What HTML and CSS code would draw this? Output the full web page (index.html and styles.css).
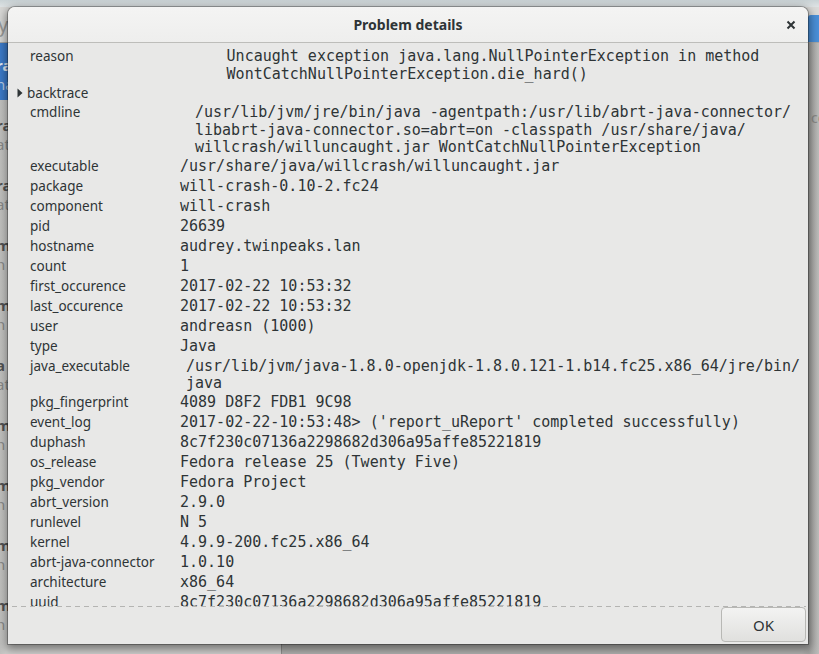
FILE: index.html
```html
<!DOCTYPE html>
<html>
<head>
<meta charset="utf-8">
<link rel="stylesheet" href="styles.css">
</head>
<body>
<div class="app">
  <div class="app-top"></div>
  <div class="app-main">
    <div class="sidebar">
      <div class="side-head"><span class="ghost">y</span></div>
      <div class="side-item selected"><div class="t"><b>ra</b><span class="time">2:16</span></div><div class="s">na</div></div>
      <div class="side-item"><div class="t"><b>ra</b><span class="time">2:14</span></div><div class="s">at</div></div>
      <div class="side-item"><div class="t"><b>ra</b><span class="time">2:12</span></div><div class="s">at</div></div>
      <div class="side-item"><div class="t"><b>m</b><span class="time">2:11</span></div><div class="s">n</div></div>
      <div class="side-item"><div class="t"><b>m</b><span class="time">2:10</span></div><div class="s">n</div></div>
      <div class="side-item"><div class="t"><b>a</b><span class="time">2:09</span></div><div class="s">at</div></div>
      <div class="side-item"><div class="t"><b>m</b><span class="time">2:08</span></div><div class="s">n</div></div>
      <div class="side-item"><div class="t"><b>m</b><span class="time">2:07</span></div><div class="s">n</div></div>
      <div class="side-item"><div class="t"><b>m</b><span class="time">2:06</span></div><div class="s">n</div></div>
      <div class="side-item"><div class="t"><b>m</b><span class="time">2:06</span></div><div class="s">n</div></div>
    </div>
    <div class="pane">
      <div class="pane-head"><span class="blue-btn">Report</span></div>
      <div class="pane-body"><span class="ghost2">core</span></div>
    </div>
  </div>
</div>

<div class="dialog">
  <div class="titlebar">
    <span></span>
    <span class="title">Problem details</span>
    <span class="close"><svg width="10" height="10" viewBox="0 0 10 10"><path d="M1.5 1.5 L8.5 8.5 M8.5 1.5 L1.5 8.5" stroke="#2e3436" stroke-width="2" fill="none"/></svg></span>
  </div>
  <div class="scroll">
    <div class="grid">
      <div class="k">reason</div>
      <div class="v wrap">Uncaught exception java.lang.NullPointerException in method<br>WontCatchNullPointerException.die_hard()</div>

      <div class="exp"><svg width="6" height="10" viewBox="0 0 6 10"><path d="M0.5 0.5 L5.5 5 L0.5 9.5 Z" fill="#2e3436"/></svg><span>backtrace</span></div>

      <div class="k">cmdline</div>
      <div class="v wrap">/usr/lib/jvm/jre/bin/java -agentpath:/usr/lib/abrt-java-connector/<br>libabrt-java-connector.so=abrt=on -classpath /usr/share/java/<br>willcrash/willuncaught.jar WontCatchNullPointerException</div>

      <div class="k">executable</div><div class="v">/usr/share/java/willcrash/willuncaught.jar</div>
      <div class="k">package</div><div class="v">will-crash-0.10-2.fc24</div>
      <div class="k">component</div><div class="v">will-crash</div>
      <div class="k">pid</div><div class="v">26639</div>
      <div class="k">hostname</div><div class="v">audrey.twinpeaks.lan</div>
      <div class="k">count</div><div class="v">1</div>
      <div class="k">first_occurence</div><div class="v">2017-02-22 10:53:32</div>
      <div class="k">last_occurence</div><div class="v">2017-02-22 10:53:32</div>
      <div class="k">user</div><div class="v">andreasn (1000)</div>
      <div class="k">type</div><div class="v">Java</div>
      <div class="k">java_executable</div>
      <div class="v wrap">/usr/lib/jvm/java-1.8.0-openjdk-1.8.0.121-1.b14.fc25.x86_64/jre/bin/<br>java</div>
      <div class="k">pkg_fingerprint</div><div class="v">4089 D8F2 FDB1 9C98</div>
      <div class="k">event_log</div><div class="v">2017-02-22-10:53:48&gt; ('report_uReport' completed successfully)</div>
      <div class="k">duphash</div><div class="v">8c7f230c07136a2298682d306a95affe85221819</div>
      <div class="k">os_release</div><div class="v">Fedora release 25 (Twenty Five)</div>
      <div class="k">pkg_vendor</div><div class="v">Fedora Project</div>
      <div class="k">abrt_version</div><div class="v">2.9.0</div>
      <div class="k">runlevel</div><div class="v">N 5</div>
      <div class="k">kernel</div><div class="v">4.9.9-200.fc25.x86_64</div>
      <div class="k">abrt-java-connector</div><div class="v">1.0.10</div>
      <div class="k">architecture</div><div class="v">x86_64</div>
      <div class="k">uuid</div><div class="v">8c7f230c07136a2298682d306a95affe85221819</div>
      <div class="k">reported_to</div><div class="v">uReport: BTHASH=0000000000000000000000000000000000000000</div>
    </div>
  </div>
  <div class="undershoot"></div>
  <div class="actions"><button class="ok">OK</button></div>
</div>
</body>
</html>
```
FILE: styles.css
```css
html, body {
  margin: 0;
  padding: 0;
}
body {
  width: 819px;
  height: 654px;
  overflow: hidden;
  position: relative;
  font-family: "Noto Sans", "DejaVu Sans", sans-serif;
  background: #d3d9db;
}

/* background application window */
.app {
  display: flex;
  flex-direction: column;
  height: 654px;
  overflow: hidden;
}
.app-top {
  height: 7px;
  flex: none;
  background: linear-gradient(#c9d2d5, #dfe4e5);
}
.app-main {
  flex: 1;
  display: flex;
  min-height: 0;
}
.sidebar {
  width: 281px;
  flex: none;
  border-right: 1px solid #8f8f8d;
  background: linear-gradient(to right, #c2c2c0, #cfcfcd 6px);
  display: flex;
  flex-direction: column;
  overflow: hidden;
}
.side-head {
  height: 35px;
  flex: none;
  background: #d8d8d6;
  border-bottom: 1px solid #a8a8a6;
  display: flex;
  align-items: center;
  overflow: hidden;
}
.ghost {
  color: #9a9a98;
  font-size: 20px;
  margin-left: -2px;
}
.side-item {
  height: 56px;
  flex: none;
  padding: 12px 11px 0 0;
  box-sizing: border-box;
  margin-bottom: 4px;
  font-size: 15px;
  color: #555;
  overflow: hidden;
}
.side-item.selected {
  background: #3d7ccb;
  color: #e6eef8;
  height: 57px;
  margin-bottom: 3px;
}
.side-item .t {
  display: flex;
  justify-content: space-between;
  line-height: 20px;
}
.side-item .t b {
  margin-left: -4px;
}
.side-item .s {
  line-height: 18px;
  margin-left: -4px;
  color: #8d8d8b;
}
.side-item.selected .s {
  color: #bcd0ea;
}
.time {
  color: #9c9c9a;
  font-size: 15px;
}
.pane {
  flex: 1;
  display: flex;
  flex-direction: column;
  overflow: hidden;
}
.pane-head {
  height: 35px;
  flex: none;
  background: #dadad8;
  border-bottom: 1px solid #a8a8a6;
  display: flex;
  align-items: flex-end;
}
.blue-btn {
  margin-left: 526px;
  height: 27px;
  padding: 0 10px;
  background: #4a90d9;
  color: #dbe7f5;
  font-size: 15px;
  line-height: 27px;
  border-radius: 3px 0 0 0;
  white-space: nowrap;
}
.pane-body {
  flex: 1;
  background: linear-gradient(to right, #b0b0ae 520px, #a4a4a2 527px, #bdbdbb 537px);
  padding-top: 63px;
}
.ghost2 {
  margin-left: 529px;
  color: #8a8a88;
  font-size: 14px;
}

/* dialog */
.dialog {
  position: absolute;
  left: 8px;
  top: 7px;
  width: 800px;
  height: 637px;
  background: #e8e8e7;
  border-radius: 7px 7px 0 0;
  box-shadow: 0 0 0 1px rgba(0, 0, 0, 0.28), 0 3px 10px 2px rgba(0, 0, 0, 0.45);
  display: flex;
  flex-direction: column;
  overflow: hidden;
  color: #2e3436;
}
.titlebar {
  height: 35px;
  flex: none;
  display: grid;
  grid-template-columns: 1fr auto 1fr;
  align-items: center;
  background: linear-gradient(#f4f4f3, #eeeeed);
  border-bottom: 1px solid #bdbdba;
}
.title {
  font-weight: bold;
  font-size: 14px;
  color: #2e3436;
}
.close {
  justify-self: end;
  margin-right: 12px;
  display: flex;
}
.scroll {
  height: 563px;
  flex: none;
  overflow: hidden;
}
.grid {
  display: grid;
  grid-template-columns: 150px 626px;
  padding: 4px 0 0 22px;
  align-items: start;
}
.k {
  font-size: 13.5px;
  line-height: 18px;
  padding-bottom: 2px;
  white-space: nowrap;
}
.v {
  font-family: "DejaVu Sans Mono", monospace;
  font-size: 15px;
  line-height: 17.5px;
  padding-top: 1px;
  white-space: nowrap;
}
.v.wrap {
  justify-self: center;
}
.exp {
  grid-column: 1 / -1;
  margin-left: -13px;
  display: flex;
  align-items: center;
  gap: 4px;
  font-size: 13.5px;
  line-height: 20px;
}
.undershoot {
  height: 1px;
  flex: none;
  margin: 0 2px 0 4px;
  background: repeating-linear-gradient(to right, #b4b4b2 0 5px, transparent 5px 9px);
}
.actions {
  flex: 1;
  display: flex;
  justify-content: flex-end;
  align-items: flex-start;
  padding: 0 2px 0 0;
}
.ok {
  width: 85px;
  height: 35px;
  margin: 0;
  border: 1px solid #b8b8b5;
  border-radius: 4px;
  background: linear-gradient(#f3f3f2, #e0e0de);
  font-family: "Noto Sans", sans-serif;
  font-size: 15px;
  color: #2e3436;
  padding: 0;
}
```
